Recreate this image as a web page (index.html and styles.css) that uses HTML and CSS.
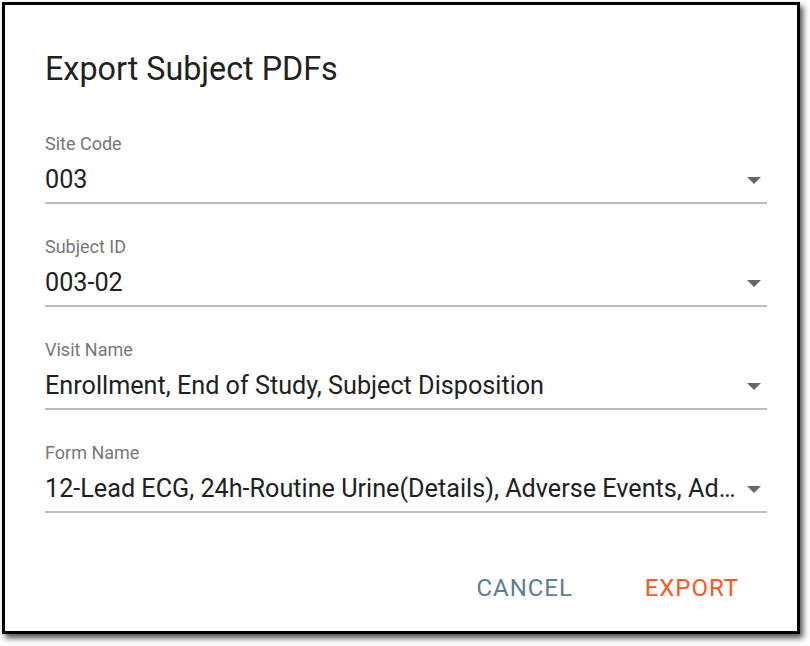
FILE: index.html
```html
<!DOCTYPE html>
<html>
<head>
  <title>Export Subject PDFs</title>
  <meta charset="UTF-8">
  <link rel="stylesheet" href="styles.css">
</head>
<body>
  <div class="dialog">
    <h2 class="dialog-title">Export Subject PDFs</h2>

    <div class="fields">
      <!-- Site -->
      <div class="field">
        <div class="field-label">Site Code</div>
        <div class="field-select">
          <span class="field-value">003</span>
          <span class="arrow"></span>
        </div>
      </div>

      <!-- Subject -->
      <div class="field">
        <div class="field-label">Subject ID</div>
        <div class="field-select">
          <span class="field-value">003-02</span>
          <span class="arrow"></span>
        </div>
      </div>

      <!-- Visit -->
      <div class="field">
        <div class="field-label">Visit Name</div>
        <div class="field-select">
          <span class="field-value">Enrollment, End of Study, Subject Disposition</span>
          <span class="arrow"></span>
        </div>
      </div>

      <!-- Form -->
      <div class="field">
        <div class="field-label">Form Name</div>
        <div class="field-select">
          <span class="field-value">12-Lead ECG, 24h-Routine Urine(Details), Adverse Events, Adverse Events Log, Concomitant Medications</span>
          <span class="arrow"></span>
        </div>
      </div>
    </div>

    <div class="actions">
      <button class="btn btn-cancel">Cancel</button>
      <button class="btn btn-export">Export</button>
    </div>
  </div>
</body>
</html>
```

FILE: styles.css
```css
html, body { margin: 0; padding: 0; background: #fff; }
body {
  font-family: Roboto, "Liberation Sans", Arial, sans-serif;
  color: #212121;
  width: 810px;
  height: 646px;
  overflow: hidden;
}
.dialog {
  box-sizing: border-box;
  width: 798px;
  height: 632px;
  margin: 2px 0 0 2px;
  border: 3px solid #000;
  background: #fff;
  box-shadow: 3px 4px 6px rgba(0, 0, 0, 0.7);
  padding: 46px 30px 0 40px;
}
.dialog-title {
  margin: 0;
  font-size: 32.3px;
  line-height: 36px;
  font-weight: 400;
  color: #212121;
}
.fields { display: flex; flex-direction: column; gap: 32px; margin-top: 46px; }
.field { border-bottom: 2px solid #bdbdbd; padding-bottom: 7px; }
.field-label { font-size: 18px; line-height: 22px; color: #777; }
.field-select { display: flex; align-items: center; margin-top: 10px; }
.field-value {
  flex: 1;
  min-width: 0;
  font-size: 25.2px;
  line-height: 30px;
  color: #212121;
  white-space: nowrap;
  overflow: hidden;
  text-overflow: ellipsis;
  margin-right: 10px;
}
.arrow {
  width: 0;
  height: 0;
  border-left: 7px solid transparent;
  border-right: 7px solid transparent;
  border-top: 7px solid #666;
  margin: 0 6px 0 0;
}
.actions { display: flex; justify-content: flex-end; gap: 48px; margin-top: 57px; padding-right: 16px; }
.btn {
  font-family: inherit;
  font-size: 24px;
  line-height: 36px;
  letter-spacing: 0.95px;
  padding: 0 12px;
  border: none;
  background: none;
  text-transform: uppercase;
  cursor: pointer;
}
.btn-cancel { color: #607d8b; }
.btn-export { color: #ff5722; }
```
